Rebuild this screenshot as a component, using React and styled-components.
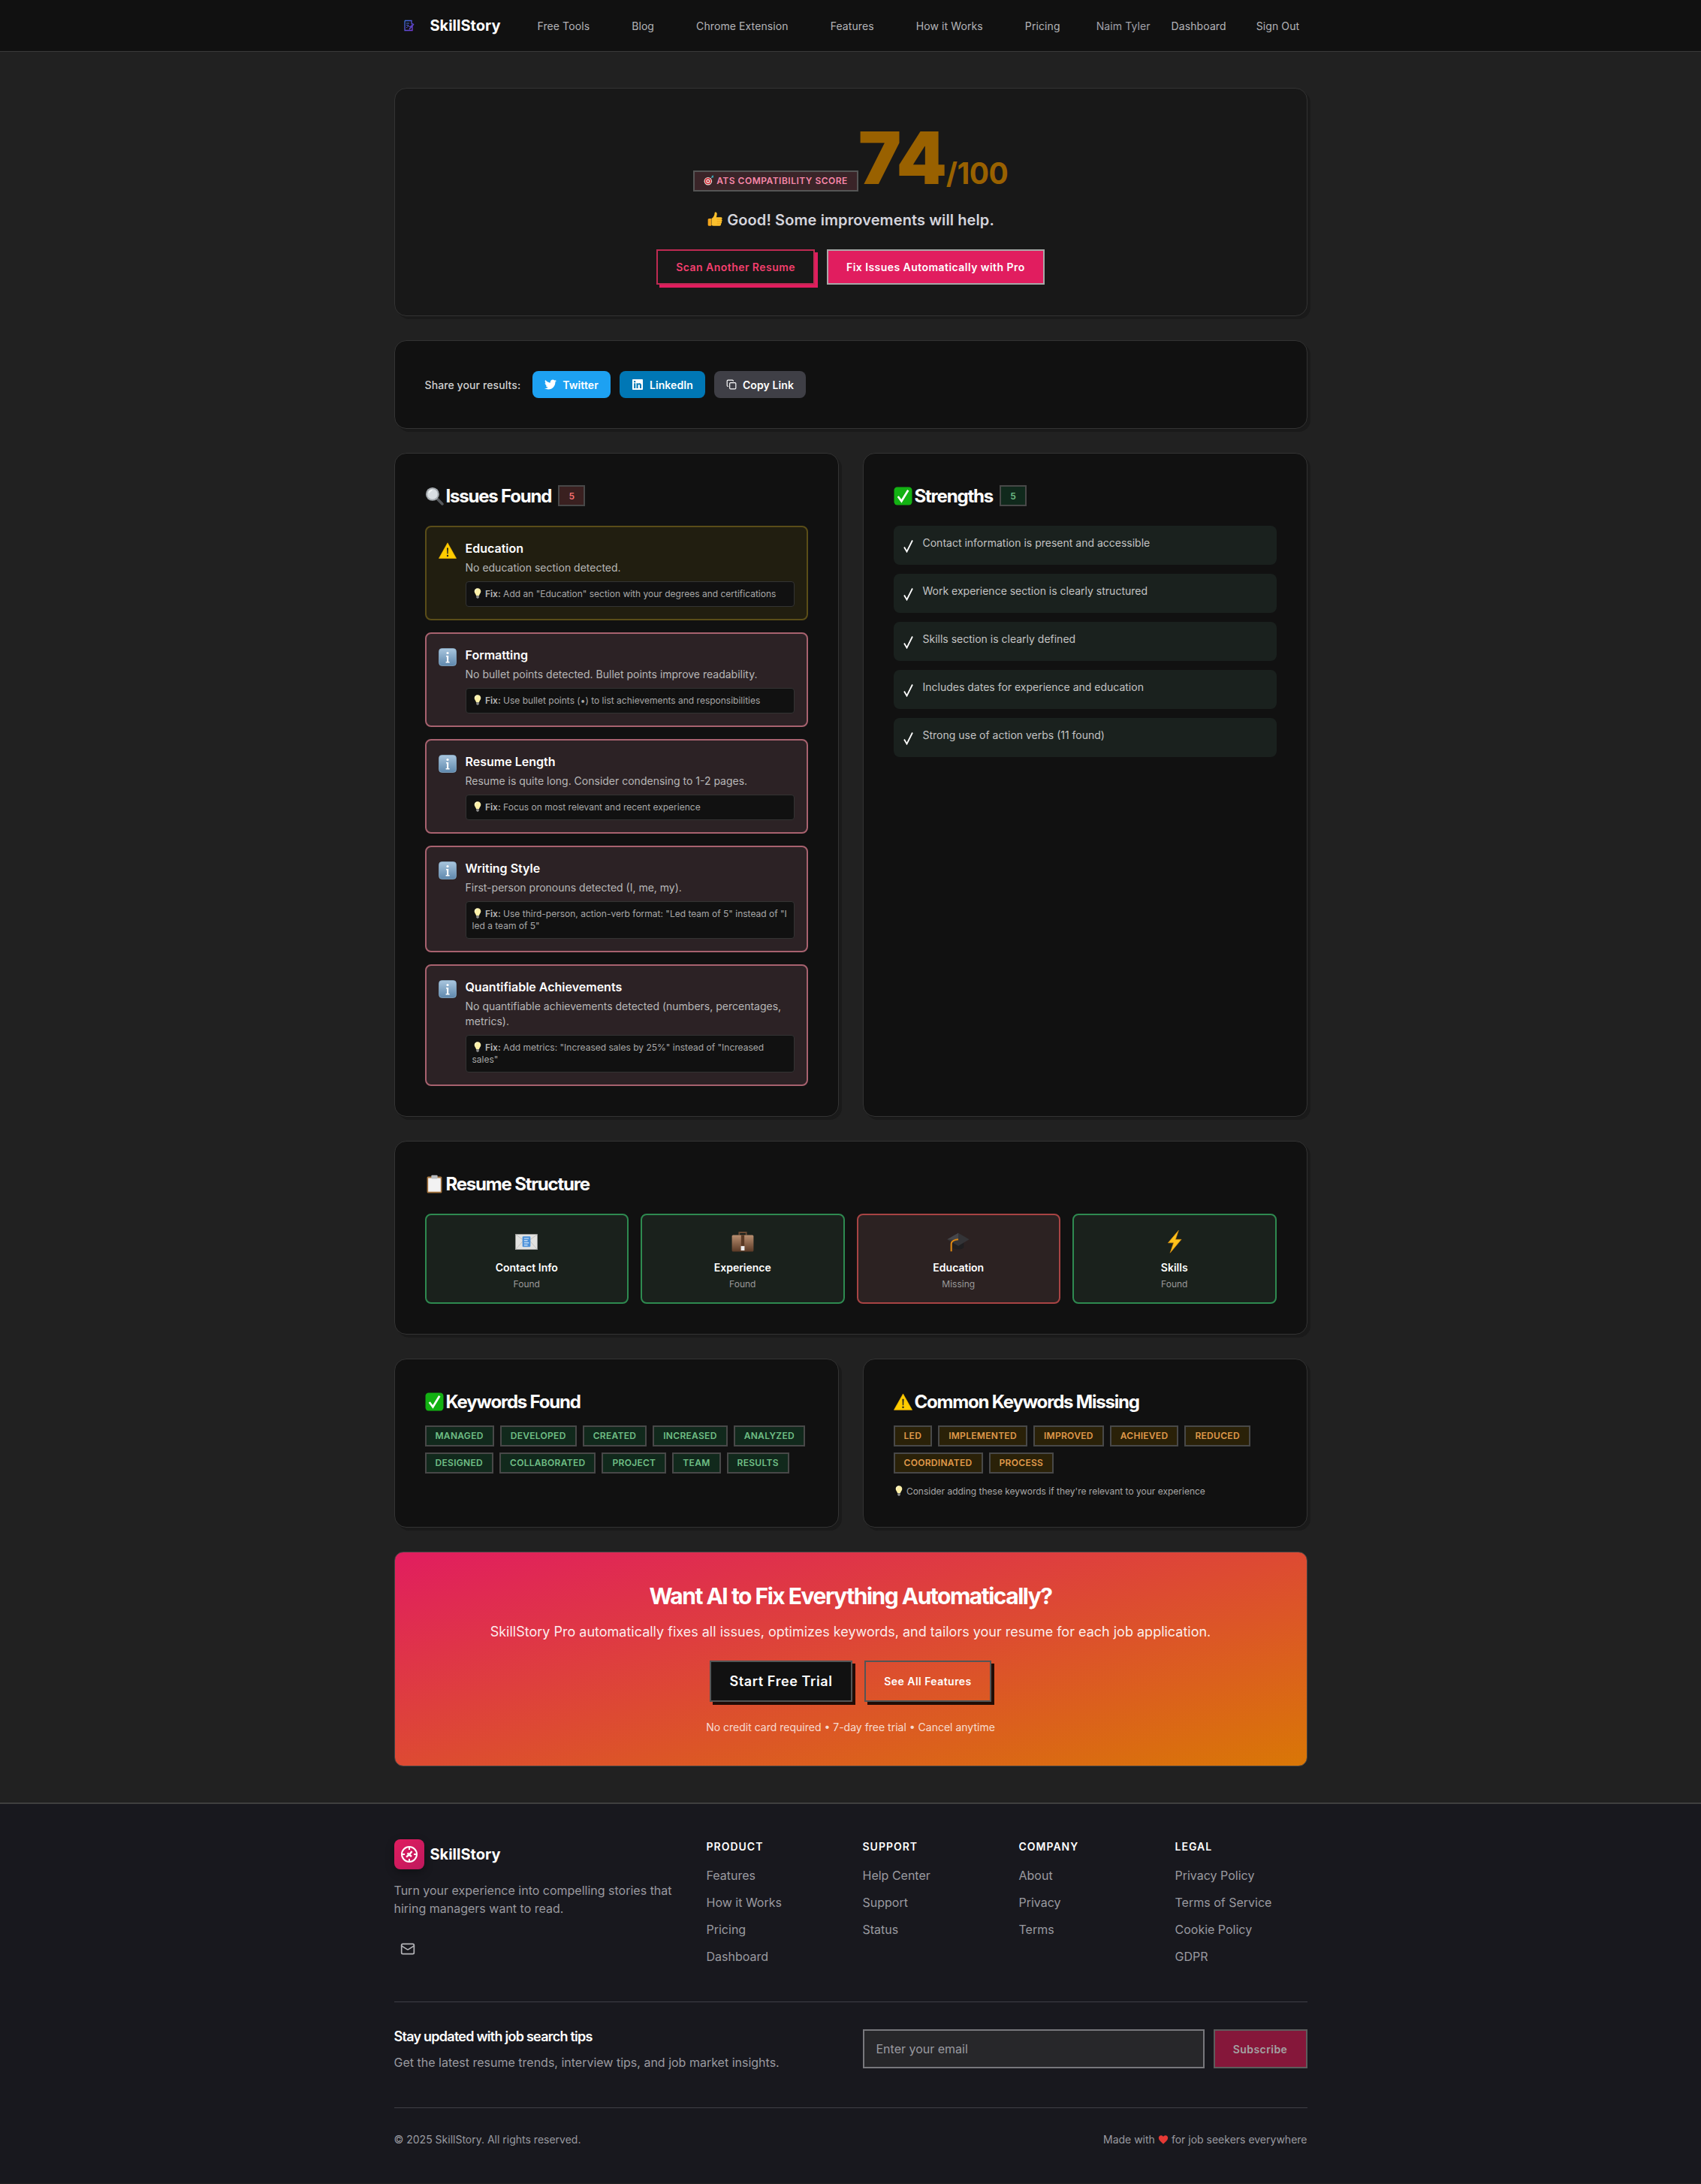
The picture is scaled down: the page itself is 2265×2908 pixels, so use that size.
import React from 'react';
import styled, { createGlobalStyle } from 'styled-components';
import { Mail, Copy } from 'lucide-react';
import { FaTwitter, FaLinkedin } from 'react-icons/fa';

const GlobalStyle = createGlobalStyle`
    html, body {
        margin: 0;
        padding: 0;
        background: #212121;
        font-family: Inter, "Liberation Sans", sans-serif;
        color: #fff;
    }
    * { box-sizing: border-box; }
`;

const drawings = {
    target: (
        <>
            <circle cx="10" cy="14" r="9" fill="#e8e2dc" />
            <circle cx="10" cy="14" r="7" fill="#d3202c" />
            <circle cx="10" cy="14" r="4.4" fill="#f4efe9" />
            <circle cx="10" cy="14" r="2.4" fill="#d3202c" />
            <path d="M10 14 L20 4" stroke="#8a99a3" strokeWidth="1.4" />
            <path d="M18 6 L18.5 1.5 L22.5 1 L22 4.5 L23 5.5 L19 6.5z" fill="#39a6b5" />
        </>
    ),
    thumb: (
        <>
            <path d="M3 11 h3.5 v10.5 h-3.5 a1.2 1.2 0 0 1-1.2-1.2 v-8 a1.2 1.2 0 0 1 1.2-1.2z" fill="#f4a51c" />
            <path d="M7 11 C10 9 11.5 6 11.6 2.6 C11.7 1 14.6 1.2 14.9 3.6 C15.1 5.6 14.3 7.6 14 9 L20.6 9 C22.8 9 22.9 11.6 21.6 12.2 C23 13 22.8 15 21.4 15.4 C22.4 16.4 22 18 20.7 18.4 C21.3 19.8 20.4 21.6 18.6 21.6 L11 21.6 C9 21.6 8 20.8 7 20.6z" fill="#fbc02d" />
            <path d="M15 12.2 h6.5 M15 15.4 h6 M15 18.4 h5.4" stroke="#e69a16" strokeWidth="0.7" />
        </>
    ),
    search: (
        <>
            <path d="M15 15 L22 22" stroke="#55585c" strokeWidth="3.4" strokeLinecap="round" />
            <circle cx="9.5" cy="9.5" r="8.6" fill="#a4a9ae" />
            <circle cx="9.5" cy="9.5" r="6.6" fill="#d9dee2" />
            <path d="M5 8 A5 5 0 0 1 9 4.6" stroke="#f6f8f9" strokeWidth="1.5" fill="none" />
        </>
    ),
    warning: (
        <>
            <path d="M12 1.8 L23.6 22.4 H0.4z" fill="#ffcc00" stroke="#f6b800" strokeWidth="0.6" strokeLinejoin="round" />
            <path d="M11 8.5 h2 l-0.4 8 h-1.2z" fill="#222" />
            <circle cx="12" cy="19" r="1.2" fill="#222" />
        </>
    ),
    info: (
        <>
            <rect x="0.5" y="0.5" width="23" height="23" rx="4" fill="url(#infoFill)" />
            <rect x="0.5" y="0.5" width="23" height="23" rx="4" fill="none" stroke="#8eb4d2" strokeWidth="0.7" />
            <circle cx="12" cy="6.5" r="1.6" fill="#fff" />
            <path d="M10 10 h3.2 v8 h1.4 v1.4 h-5 v-1.4 h1.4 v-6.6 h-1z" fill="#fff" />
        </>
    ),
    bulb: (
        <>
            <path d="M12 0.5 C7.4 0.5 4.6 4 4.6 7.6 C4.6 11.2 7.8 13.4 8.8 17.6 H15.2 C16.2 13.4 19.4 11.2 19.4 7.6 C19.4 4 16.6 0.5 12 0.5z" fill="#fdf0a8" />
            <path d="M12 2 C8.4 2 6 4.6 6 8" stroke="#fffde7" strokeWidth="1.6" fill="none" />
            <path d="M9 17.6 h6 v3.4 l-1.6 2.4 h-2.8 l-1.6-2.4z" fill="#8d8d8d" />
        </>
    ),
    check: (
        <>
            <rect x="0.5" y="0.5" width="23" height="23" rx="4" fill="#13b113" />
            <path d="M5.5 12.5 L10 18.5 L18.5 4.5" stroke="#fff" strokeWidth="2.6" fill="none" strokeLinejoin="miter" />
        </>
    ),
    clipboard: (
        <>
            <rect x="2.5" y="2.5" width="19" height="21" rx="1.5" fill="#a8763f" />
            <rect x="4" y="4.4" width="16" height="17.4" fill="#f2f2f2" />
            <rect x="8" y="0.6" width="8" height="4.6" rx="1" fill="#b9bcc0" />
        </>
    ),
    contact: (
        <>
            <rect x="1.2" y="5" width="21.6" height="15" fill="#e2e2e0" stroke="#b0b0ae" strokeWidth="0.5" />
            <path d="M1.2 5 L12 13 L22.8 5 M1.2 20 L9 11 M22.8 20 L15 11" stroke="#bdbdbb" strokeWidth="0.6" fill="none" />
            <rect x="8" y="7" width="8" height="10.5" rx="0.8" fill="#4a90d9" />
            <path d="M9.6 9 h4.8 M9.6 11.2 h3.6 M9.6 13.4 h4.8 M9.6 15.6 h3.6" stroke="#d9ecfb" strokeWidth="0.9" />
        </>
    ),
    briefcase: (
        <>
            <path d="M8.5 5.6 V3 h7 V5.6" stroke="#6b4a33" strokeWidth="1.4" fill="none" />
            <rect x="1.2" y="5.6" width="21.6" height="16.6" rx="1.2" fill="url(#caseFill)" />
            <rect x="10.4" y="5.6" width="3.2" height="11" fill="#5a3a25" />
            <rect x="10.2" y="16.6" width="3.6" height="4.4" fill="#eee" />
        </>
    ),
    cap: (
        <>
            <path d="M6.5 12 V18 C9 20.6 15 20.6 17.5 18 V12z" fill="#1f1f21" />
            <path d="M12 3.5 L23 10 L12 16.5 L1 10z" fill="#343437" />
            <path d="M12 3.5 L1 10 L12 10.5z" fill="#46464a" />
            <path d="M12 10 C7 10.5 5 12 5 14.5 V22" stroke="#e08a12" strokeWidth="1.5" fill="none" />
        </>
    ),
    bolt: (
        <path d="M16 1 L5.5 13.4 H11 L7.6 23.4 L18.8 10 H13z" fill="#ffc21a" stroke="#d68a10" strokeWidth="0.5" />
    ),
    heart: (
        <path d="M12 22 C5 16 1.4 12.2 1.4 7.8 C1.4 4.4 4 2 7 2 C9.2 2 11 3.2 12 5.2 C13 3.2 14.8 2 17 2 C20 2 22.6 4.4 22.6 7.8 C22.6 12.2 19 16 12 22z" fill="#e53935" />
    ),
};

const Emoji = ({ name, size = 16 }) => (
    <EmojiSvg viewBox="0 0 24 24" width={size} height={size}>
        <defs>
            <linearGradient id="infoFill" x1="0" y1="0" x2="0" y2="1">
                <stop offset="0" stopColor="#a9c6de" />
                <stop offset="1" stopColor="#5f88ad" />
            </linearGradient>
            <linearGradient id="caseFill" x1="0" y1="0" x2="0" y2="1">
                <stop offset="0" stopColor="#b98f70" />
                <stop offset="1" stopColor="#5b3a26" />
            </linearGradient>
        </defs>
        {drawings[name]}
    </EmojiSvg>
);

const issues = [
    { tone: 'warn', icon: 'warning', title: 'Education', desc: 'No education section detected.', fix: 'Add an "Education" section with your degrees and certifications' },
    { tone: 'info', icon: 'info', title: 'Formatting', desc: 'No bullet points detected. Bullet points improve readability.', fix: 'Use bullet points (•) to list achievements and responsibilities' },
    { tone: 'info', icon: 'info', title: 'Resume Length', desc: 'Resume is quite long. Consider condensing to 1-2 pages.', fix: 'Focus on most relevant and recent experience' },
    { tone: 'info', icon: 'info', title: 'Writing Style', desc: 'First-person pronouns detected (I, me, my).', fix: 'Use third-person, action-verb format: "Led team of 5" instead of "I led a team of 5"' },
    { tone: 'info', icon: 'info', title: 'Quantifiable Achievements', desc: 'No quantifiable achievements detected (numbers, percentages, metrics).', fix: 'Add metrics: "Increased sales by 25%" instead of "Increased sales"' },
];

const strengths = [
    'Contact information is present and accessible',
    'Work experience section is clearly structured',
    'Skills section is clearly defined',
    'Includes dates for experience and education',
    'Strong use of action verbs (11 found)',
];

const sections = [
    { icon: 'contact', label: 'Contact Info', status: 'Found', found: true },
    { icon: 'briefcase', label: 'Experience', status: 'Found', found: true },
    { icon: 'cap', label: 'Education', status: 'Missing', found: false },
    { icon: 'bolt', label: 'Skills', status: 'Found', found: true },
];

const foundKeywords = ['managed', 'developed', 'created', 'increased', 'analyzed', 'designed', 'collaborated', 'project', 'team', 'results'];
const missingKeywords = ['led', 'implemented', 'improved', 'achieved', 'reduced', 'coordinated', 'process'];

const footerColumns = [
    { title: 'Product', links: ['Features', 'How it Works', 'Pricing', 'Dashboard'] },
    { title: 'Support', links: ['Help Center', 'Support', 'Status'] },
    { title: 'Company', links: ['About', 'Privacy', 'Terms'] },
    { title: 'Legal', links: ['Privacy Policy', 'Terms of Service', 'Cookie Policy', 'GDPR'] },
];

export default function App() {
    return (
        <>
            <GlobalStyle />
            <Nav>
                <NavInner>
                    <Brand>
                        <svg viewBox="0 0 16 16" width="16" height="16" fill="none">
                            <defs>
                                <linearGradient id="navLogo" x1="0" y1="0" x2="1" y2="1">
                                    <stop offset="0" stopColor="#3b6fd8" />
                                    <stop offset="1" stopColor="#7a35d8" />
                                </linearGradient>
                            </defs>
                            <path d="M2 1.5 H11 V6 M14 6 L8 13 M2 1.5 V14.5 H12 V9" stroke="url(#navLogo)" strokeWidth="1.3" />
                            <path d="M4 5 H8 M4 7.5 H7 M4 11 L7 8.5 L9 10 L13 5" stroke="url(#navLogo)" strokeWidth="1" />
                        </svg>
                        <BrandName>SkillStory</BrandName>
                    </Brand>
                    <NavLinks>
                        <NavLink>Free Tools</NavLink>
                        <NavLink>Blog</NavLink>
                        <NavLink>Chrome Extension</NavLink>
                        <NavLink>Features</NavLink>
                        <NavLink>How it Works</NavLink>
                        <NavLink>Pricing</NavLink>
                    </NavLinks>
                    <UserName>Naim Tyler</UserName>
                    <NavAction>Dashboard</NavAction>
                    <NavAction $last>Sign Out</NavAction>
                </NavInner>
            </Nav>

            <Main>
                <HeroCard>
                    <ScoreLine>
                        <ScoreBadge><Emoji name="target" size={14} /> ATS Compatibility Score</ScoreBadge>
                        <ScoreValue>74</ScoreValue>
                        <ScoreMax>/100</ScoreMax>
                    </ScoreLine>
                    <Verdict><Emoji name="thumb" size={22} /> Good! Some improvements will help.</Verdict>
                    <HeroActions>
                        <OutlineButton>Scan Another Resume</OutlineButton>
                        <ProButton>Fix Issues Automatically with Pro</ProButton>
                    </HeroActions>
                </HeroCard>

                <ShareCard>
                    <ShareLabel>Share your results:</ShareLabel>
                    <ShareButton $bg="#1da1f2"><FaTwitter size={16} /> Twitter</ShareButton>
                    <ShareButton $bg="#0077b5"><FaLinkedin size={16} /> LinkedIn</ShareButton>
                    <ShareButton $bg="#3f3f46"><Copy size={14} /> Copy Link</ShareButton>
                </ShareCard>

                <TwoCols>
                    <Card>
                        <CardTitle>
                            <Emoji name="search" size={25} />Issues Found
                            <CountBadge $tone="bad">5</CountBadge>
                        </CardTitle>
                        <IssueList>
                            {issues.map(issue => (
                                <Issue key={issue.title} $tone={issue.tone}>
                                    <IssueIcon><Emoji name={issue.icon} size={24} /></IssueIcon>
                                    <IssueBody>
                                        <IssueTitle>{issue.title}</IssueTitle>
                                        <IssueDesc>{issue.desc}</IssueDesc>
                                        <FixBox>
                                            <Emoji name="bulb" size={14} /> <strong>Fix:</strong> {issue.fix}
                                        </FixBox>
                                    </IssueBody>
                                </Issue>
                            ))}
                        </IssueList>
                    </Card>
                    <Card>
                        <CardTitle>
                            <Emoji name="check" size={25} />Strengths
                            <CountBadge $tone="good">5</CountBadge>
                        </CardTitle>
                        <StrengthList>
                            {strengths.map(text => (
                                <Strength key={text}>
                                    <CheckMark viewBox="0 0 15 18" width="15" height="18">
                                        <path d="M2 10.5 L5.5 16.5 L13 1.5" stroke="#fff" strokeWidth="1.8" fill="none" />
                                    </CheckMark>
                                    <span>{text}</span>
                                </Strength>
                            ))}
                        </StrengthList>
                    </Card>
                </TwoCols>

                <Card>
                    <CardTitle><Emoji name="clipboard" size={25} />Resume Structure</CardTitle>
                    <StructureGrid>
                        {sections.map(section => (
                            <StructureItem key={section.label} $found={section.found}>
                                <StructureIcon><Emoji name={section.icon} size={32} /></StructureIcon>
                                <StructureLabel>{section.label}</StructureLabel>
                                <StructureStatus>{section.status}</StructureStatus>
                            </StructureItem>
                        ))}
                    </StructureGrid>
                </Card>

                <TwoCols>
                    <Card>
                        <CardTitle $tight><Emoji name="check" size={25} />Keywords Found</CardTitle>
                        <ChipRow>
                            {foundKeywords.map(word => <Chip key={word} $found>{word}</Chip>)}
                        </ChipRow>
                    </Card>
                    <Card>
                        <CardTitle $tight><Emoji name="warning" size={25} />Common Keywords Missing</CardTitle>
                        <ChipRow>
                            {missingKeywords.map(word => <Chip key={word}>{word}</Chip>)}
                        </ChipRow>
                        <KeywordHint><Emoji name="bulb" size={14} /> Consider adding these keywords if they're relevant to your experience</KeywordHint>
                    </Card>
                </TwoCols>

                <Cta>
                    <CtaTitle>Want AI to Fix Everything Automatically?</CtaTitle>
                    <CtaText>SkillStory Pro automatically fixes all issues, optimizes keywords, and tailors your resume for each job application.</CtaText>
                    <CtaActions>
                        <TrialButton>Start Free Trial</TrialButton>
                        <FeaturesButton>See All Features</FeaturesButton>
                    </CtaActions>
                    <CtaNote>No credit card required • 7-day free trial • Cancel anytime</CtaNote>
                </Cta>
            </Main>

            <Footer>
                <FooterInner>
                    <FooterGrid>
                        <div>
                            <FooterBrand>
                                <FooterLogo>
                                    <svg viewBox="0 0 24 24" width="24" height="24" fill="none" stroke="#fff" strokeWidth="2">
                                        <circle cx="12" cy="12" r="10" />
                                        <path d="M12 2 V6 M12 18 V22 M2 12 H6 M18 12 H22" />
                                        <path d="M8 15.5 L12 12.5 L15.5 8 M12 12.5 L15 15 M9.5 10.5 L12 12.5" strokeWidth="2.4" />
                                    </svg>
                                </FooterLogo>
                                <FooterBrandName>SkillStory</FooterBrandName>
                            </FooterBrand>
                            <FooterTagline>Turn your experience into compelling stories that hiring managers want to read.</FooterTagline>
                            <MailLink><Mail size={20} /></MailLink>
                        </div>
                        {footerColumns.map(column => (
                            <div key={column.title}>
                                <FooterHeading>{column.title}</FooterHeading>
                                <FooterLinks>
                                    {column.links.map(link => <FooterLink key={link}>{link}</FooterLink>)}
                                </FooterLinks>
                            </div>
                        ))}
                    </FooterGrid>

                    <Newsletter>
                        <div>
                            <NewsletterTitle>Stay updated with job search tips</NewsletterTitle>
                            <NewsletterText>Get the latest resume trends, interview tips, and job market insights.</NewsletterText>
                        </div>
                        <NewsletterForm>
                            <EmailInput placeholder="Enter your email" readOnly />
                            <SubscribeButton>Subscribe</SubscribeButton>
                        </NewsletterForm>
                    </Newsletter>

                    <FooterBottom>
                        <span>© 2025 SkillStory. All rights reserved.</span>
                        <MadeWith>Made with <Emoji name="heart" size={14} /> for job seekers everywhere</MadeWith>
                    </FooterBottom>
                </FooterInner>
            </Footer>
        </>
    );
}

const EmojiSvg = styled.svg`
    display: inline-block;
    vertical-align: -0.15em;
    flex-shrink: 0;
`;

const Nav = styled.nav`
    height: 69px;
    background: #111111;
    border-bottom: 1px solid #3a3a3a;
`;

const NavInner = styled.div`
    width: 1216px;
    height: 68px;
    margin: 0 auto;
    display: flex;
    align-items: center;
    font-size: 14px;
    letter-spacing: 0.1px;
`;

const Brand = styled.div`
    display: flex;
    align-items: center;
    gap: 20px;
    margin-left: 12px;
`;

const BrandName = styled.span`
    font-size: 20px;
    font-weight: 700;
    letter-spacing: 0;
    color: #fff;
`;

const NavLinks = styled.div`
    display: flex;
    gap: 56px;
    margin-left: 49px;
`;

const NavLink = styled.a`
    color: #b4b4b8;
`;

const UserName = styled.span`
    margin-left: 48px;
    color: #a1a1aa;
`;

const NavAction = styled.a`
    margin-left: ${ props => props.$last ? '40px' : '28px' };
    color: #b4b4b8;
`;

const Main = styled.main`
    width: 1216px;
    margin: 0 auto;
    padding: 48px 0;
    display: flex;
    flex-direction: column;
    gap: 32px;
`;

const Card = styled.section`
    background: #111111;
    border: 1px solid #333333;
    border-radius: 16px;
    box-shadow: 4px 4px 0 #1a1a1a;
    padding: 40px;
`;

const HeroCard = styled(Card)`
    background: #181818;
    height: 304px;
    padding: 44px 40px 0;
    text-align: center;
`;

const ScoreLine = styled.div`
    line-height: 1;
    color: #996100;
`;

const ScoreBadge = styled.span`
    display: inline-block;
    padding: 4px 12px;
    border: 2px solid #555555;
    background: #3a2428;
    color: #f687a8;
    font-size: 12px;
    font-weight: 600;
    letter-spacing: 0.5px;
    line-height: 16px;
    text-transform: uppercase;
`;

const ScoreValue = styled.span`
    font-size: 96px;
    font-weight: 900;
    letter-spacing: -1px;
`;

const ScoreMax = styled.span`
    font-size: 39px;
    font-weight: 700;
    letter-spacing: -0.5px;
`;

const Verdict = styled.div`
    margin-top: 21px;
    font-size: 20px;
    font-weight: 600;
    line-height: 28px;
    letter-spacing: 0.1px;
    color: #d4d4dc;
`;

const HeroActions = styled.div`
    margin-top: 25px;
    display: flex;
    justify-content: center;
    gap: 16px;
`;

const OutlineButton = styled.button`
    height: 47px;
    padding: 0 24px;
    border: 2px solid #be2a52;
    background: #181818;
    color: #f43f6e;
    font: 600 14px Inter, sans-serif;
    letter-spacing: 0.45px;
    box-shadow: 4px 4px 0 #e11d5f;
`;

const ProButton = styled.button`
    height: 47px;
    padding: 0 24px;
    border: 2px solid #a8a8a8;
    background: #e11d5f;
    color: #fff;
    font: 600 14px Inter, sans-serif;
    letter-spacing: 0.45px;
`;

const ShareCard = styled(Card)`
    display: flex;
    align-items: center;
    gap: 12px;
    height: 118px;
`;

const ShareLabel = styled.span`
    margin-right: 4px;
    font-size: 14px;
    font-weight: 500;
    letter-spacing: 0.1px;
    color: #d0d0d0;
`;

const ShareButton = styled.button`
    display: flex;
    align-items: center;
    gap: 8px;
    height: 36px;
    padding: 0 16px;
    border: 0;
    border-radius: 8px;
    background: ${ props => props.$bg };
    color: #fff;
    font: 600 14px Inter, sans-serif;
    letter-spacing: 0.1px;
`;

const TwoCols = styled.div`
    display: grid;
    grid-template-columns: 1fr 1fr;
    gap: 32px;
`;

const CardTitle = styled.h2`
    display: flex;
    align-items: center;
    gap: 3px;
    margin: 0 0 ${ props => props.$tight ? '16px' : '24px' } 0;
    height: 32px;
    font-size: 24px;
    font-weight: 700;
    letter-spacing: -1.2px;
    color: #fff;
`;

const CountBadge = styled.span`
    display: flex;
    align-items: center;
    justify-content: center;
    width: 36px;
    height: 28px;
    margin-left: 6px;
    border: 2px solid #484848;
    background: ${ props => props.$tone === 'bad' ? '#3a2020' : '#10291c' };
    color: ${ props => props.$tone === 'bad' ? '#f87171' : '#6fbf85' };
    font-size: 12px;
    font-weight: 600;
    letter-spacing: 0;
`;

const IssueList = styled.div`
    display: flex;
    flex-direction: column;
    gap: 16px;
`;

const Issue = styled.div`
    display: flex;
    gap: 12px;
    padding: 16px;
    border-radius: 8px;
    border: 2px solid ${ props => props.$tone === 'warn' ? '#5a4d18' : '#a8626f' };
    background: ${ props => props.$tone === 'warn' ? '#211e10' : '#2c2225' };
`;

const IssueIcon = styled.div`
    flex: 0 0 24px;
    padding-top: 3px;
    line-height: 0;
`;

const IssueBody = styled.div`
    flex: 1;
    min-width: 0;
`;

const IssueTitle = styled.div`
    font-size: 16px;
    font-weight: 600;
    line-height: 24px;
    color: #fff;
`;

const IssueDesc = styled.div`
    margin-top: 4px;
    font-size: 14px;
    line-height: 20px;
    color: #b8b8b8;
`;

const FixBox = styled.div`
    margin-top: 8px;
    padding: 8px;
    border: 1px solid #333333;
    border-radius: 4px;
    background: #111111;
    font-size: 12px;
    line-height: 16px;
    color: #a8a8a8;

    svg {
        margin-block: -3px;
        vertical-align: 1px;
    }

    strong {
        font-weight: 600;
        color: #b8b8b8;
    }
`;

const StrengthList = styled.div`
    display: flex;
    flex-direction: column;
    gap: 12px;
`;

const Strength = styled.div`
    display: flex;
    gap: 12px;
    height: 52px;
    padding: 12px;
    border-radius: 8px;
    background: #1a211e;
    font-size: 14px;
    line-height: 21px;
    color: #c4c4c4;
`;

const CheckMark = styled.svg`
    flex-shrink: 0;
    margin-top: 6px;
`;

const StructureGrid = styled.div`
    display: grid;
    grid-template-columns: repeat(4, 1fr);
    gap: 16px;
`;

const StructureItem = styled.div`
    height: 120px;
    padding-top: 16px;
    text-align: center;
    border-radius: 8px;
    border: 2px solid ${ props => props.$found ? '#2e8a50' : '#a84444' };
    background: ${ props => props.$found ? '#1a211c' : '#2c2222' };
`;

const StructureIcon = styled.div`
    height: 38px;
    padding-top: 3px;
    line-height: 0;
`;

const StructureLabel = styled.div`
    margin-top: 6px;
    font-size: 14px;
    font-weight: 600;
    line-height: 20px;
    color: #fff;
`;

const StructureStatus = styled.div`
    margin-top: 4px;
    font-size: 12px;
    line-height: 16px;
    color: #9a9a9a;
`;

const ChipRow = styled.div`
    display: flex;
    flex-wrap: wrap;
    gap: 8px;
`;

const Chip = styled.span`
    height: 28px;
    padding: 0 12px;
    border: 2px solid #484848;
    background: ${ props => props.$found ? '#11291c' : '#2a2108' };
    color: ${ props => props.$found ? '#6fbf85' : '#e09a4a' };
    font-size: 12px;
    font-weight: 600;
    line-height: 24px;
    letter-spacing: 0.3px;
    text-transform: uppercase;
`;

const KeywordHint = styled.p`
    margin: 16px 0 0 0;
    font-size: 12px;
    line-height: 15px;
    color: #a8a8a8;

    svg {
        margin-block: -3px;
        vertical-align: 1px;
    }
`;

const Cta = styled.section`
    height: 286px;
    padding: 40px;
    text-align: center;
    border: 1px solid #444444;
    border-radius: 12px;
    background: linear-gradient(to bottom right, #e11d5f 0%, #d97706 100%);
`;

const CtaTitle = styled.h2`
    margin: 0;
    font-size: 30px;
    font-weight: 700;
    line-height: 36px;
    letter-spacing: -1.5px;
    color: #fff;
`;

const CtaText = styled.p`
    margin: 16px 0 0 0;
    font-size: 18px;
    line-height: 28px;
    color: rgba(255, 255, 255, 0.92);
`;

const CtaActions = styled.div`
    margin-top: 24px;
    display: flex;
    justify-content: center;
    gap: 16px;
`;

const TrialButton = styled.button`
    height: 55px;
    width: 190px;
    border: 2px solid #555555;
    background: #111111;
    color: #fff;
    font: 600 18px Inter, sans-serif;
    letter-spacing: 0.6px;
    box-shadow: 4px 4px 0 rgba(0, 0, 0, 0.85);
`;

const FeaturesButton = styled.button`
    height: 55px;
    width: 169px;
    border: 2px solid #555555;
    background: transparent;
    color: #fff;
    font: 600 14px Inter, sans-serif;
    letter-spacing: 0.45px;
    box-shadow: 4px 4px 0 rgba(0, 0, 0, 0.85);
`;

const CtaNote = styled.p`
    margin: 24px 0 0 0;
    font-size: 14px;
    line-height: 20px;
    color: rgba(255, 255, 255, 0.8);
`;

const Footer = styled.footer`
    height: 507px;
    background: #18181e;
    border-top: 2px solid #3f3f3f;
`;

const FooterInner = styled.div`
    width: 1216px;
    margin: 0 auto;
    padding-top: 47px;
`;

const FooterGrid = styled.div`
    display: grid;
    grid-template-columns: 384px repeat(4, 176px);
    gap: 32px;
    height: 216px;
`;

const FooterBrand = styled.div`
    display: flex;
    align-items: center;
    gap: 8px;
`;

const FooterLogo = styled.div`
    width: 40px;
    height: 40px;
    display: flex;
    align-items: center;
    justify-content: center;
    border-radius: 8px;
    background: linear-gradient(135deg, #e11d5f, #be185d);
    box-shadow: 0 4px 12px rgba(0, 0, 0, 0.3);
`;

const FooterBrandName = styled.span`
    font-size: 20px;
    font-weight: 700;
    color: #fff;
`;

const FooterTagline = styled.p`
    margin: 16px 0 0 0;
    font-size: 16px;
    line-height: 24px;
    color: #9a9aa0;
`;

const MailLink = styled.a`
    display: flex;
    align-items: center;
    justify-content: center;
    width: 36px;
    height: 36px;
    margin-top: 24px;
    color: #b4b4b8;
`;

const FooterHeading = styled.h3`
    margin: 0;
    font-size: 14px;
    font-weight: 600;
    line-height: 20px;
    letter-spacing: 1px;
    text-transform: uppercase;
    color: #fff;
`;

const FooterLinks = styled.div`
    margin-top: 16px;
    display: flex;
    flex-direction: column;
    gap: 12px;
`;

const FooterLink = styled.a`
    font-size: 16px;
    line-height: 24px;
    color: #9a9aa0;
`;

const Newsletter = styled.div`
    display: grid;
    grid-template-columns: 1fr 1fr;
    gap: 32px;
    align-items: center;
    height: 142px;
    padding: 32px 0 48px;
    border-top: 1px solid #3f3f46;
    border-bottom: 1px solid #3f3f46;
`;

const NewsletterTitle = styled.h3`
    margin: 0;
    font-size: 18px;
    font-weight: 600;
    line-height: 28px;
    letter-spacing: -0.75px;
    color: #fff;
`;

const NewsletterText = styled.p`
    margin: 8px 0 0 0;
    font-size: 16px;
    line-height: 24px;
    color: #9a9aa0;
`;

const NewsletterForm = styled.div`
    display: flex;
    gap: 12px;
`;

const EmailInput = styled.input`
    flex: 1;
    min-width: 0;
    height: 52px;
    padding: 0 16px;
    border: 2px solid #77777c;
    background: #27272a;
    color: #fff;
    font: 400 16px Inter, sans-serif;

    &::placeholder {
        color: #9a9aa0;
    }
`;

const SubscribeButton = styled.button`
    width: 125px;
    height: 52px;
    border: 2px solid #5c5c5c;
    background: #85173a;
    color: #a3a3a3;
    font: 600 14px Inter, sans-serif;
    letter-spacing: 0.45px;
`;

const FooterBottom = styled.div`
    display: flex;
    justify-content: space-between;
    align-items: center;
    padding-top: 32px;
    font-size: 14px;
    line-height: 20px;
    color: #9a9aa0;
`;

const MadeWith = styled.span`
    display: flex;
    align-items: center;
    gap: 4px;
`;
